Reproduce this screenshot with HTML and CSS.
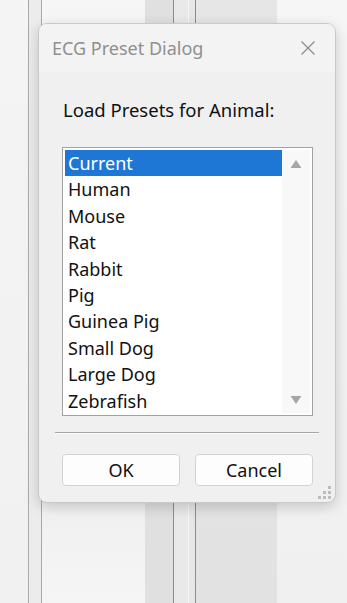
FILE: index.html
```html
<!DOCTYPE html>
<html lang="en">
<head>
    <meta charset="UTF-8">
    <meta name="viewport" content="width=device-width, initial-scale=1.0">
    <title>ECG Preset Dialog</title>
    <link rel="stylesheet" href="styles.css">
</head>
<body>

<!-- window behind the dialog -->
<div class="backdrop">
    <div class="strip s-left"></div>
    <div class="line dark"></div>
    <div class="strip s-gutter"></div>
    <div class="line dark"></div>
    <div class="strip s-panel"></div>
    <div class="strip s-band"></div>
    <div class="line darker"></div>
    <div class="strip s-split"></div>
    <div class="line light"></div>
    <div class="strip s-split2"></div>
    <div class="line darker"></div>
    <div class="strip s-band2"></div>
    <div class="strip s-right"></div>
</div>

<div class="dialog">
    <div class="titlebar">
        <span class="title">ECG Preset Dialog</span>
        <svg class="close" width="16" height="16" viewBox="0 0 16 16">
            <path d="M1.5 1.5 L14.5 14.5 M14.5 1.5 L1.5 14.5" stroke="#8a8a8a" stroke-width="1.2" fill="none"/>
        </svg>
    </div>

    <div class="content">
        <p class="label">Load Presets for Animal:</p>

        <div class="listbox">
            <ul class="items">
                <li class="selected">Current</li>
                <li>Human</li>
                <li>Mouse</li>
                <li>Rat</li>
                <li>Rabbit</li>
                <li>Pig</li>
                <li>Guinea Pig</li>
                <li>Small Dog</li>
                <li>Large Dog</li>
                <li>Zebrafish</li>
            </ul>
            <div class="scrollbar">
                <svg width="12" height="10" viewBox="0 0 12 10"><path d="M6 1 L11.5 9 L0.5 9 Z" fill="#a6a6a6"/></svg>
                <svg width="12" height="10" viewBox="0 0 12 10"><path d="M0.5 1 L11.5 1 L6 9 Z" fill="#a6a6a6"/></svg>
            </div>
        </div>

        <hr class="separator">

        <div class="buttons">
            <button class="btn">OK</button>
            <button class="btn">Cancel</button>
        </div>
    </div>

    <svg class="grip" width="14" height="14" viewBox="0 0 14 14">
        <rect x="10" y="0" width="3" height="3" fill="#bdbdbd"/>
        <rect x="5" y="5" width="3" height="3" fill="#bdbdbd"/>
        <rect x="10" y="5" width="3" height="3" fill="#bdbdbd"/>
        <rect x="0" y="10" width="3" height="3" fill="#bdbdbd"/>
        <rect x="5" y="10" width="3" height="3" fill="#bdbdbd"/>
        <rect x="10" y="10" width="3" height="3" fill="#bdbdbd"/>
    </svg>
</div>

</body>
</html>
```

FILE: styles.css
```css
body {
    margin: 0;
    padding: 0;
    width: 347px;
    height: 603px;
    overflow: hidden;
    font-family: "Noto Sans", "Open Sans", sans-serif;
    background: #f3f3f3;
}
.backdrop {
    display: flex;
    height: 603px;
}
.strip {
    height: 100%;
}
.line {
    width: 1px;
    height: 100%;
}
.line.dark { background: #a9a9a9; }
.line.darker { background: #8c8c8c; }
.line.light { background: #f7f7f7; }
.s-left { width: 28px; background: linear-gradient(#f4f4f4, #f1f1f1); }
.s-gutter { width: 12px; background: #ececec; }
.s-panel { width: 103px; background: linear-gradient(#f6f6f6, #ececec 70%, #f5f5f5); }
.s-band { width: 28px; background: #e0e0e0; }
.s-split { width: 14px; background: #e9e9e9; }
.s-split2 { width: 6px; background: #e6e6e6; }
.s-band2 { width: 81px; background: linear-gradient(#e6e6e6, #e2e2e2); }
.s-right { flex: 1; background: linear-gradient(#f6f6f6, #f0f0f0); }

/* dialog floats over the window */
.dialog {
    position: absolute;
    left: 38px;
    top: 23px;
    width: 298px;
    height: 480px;
    background: #f0f0f0;
    border: 1px solid #c9c9c9;
    border-radius: 9px;
    box-shadow: 0 4px 14px rgba(0, 0, 0, 0.18);
    box-sizing: border-box;
    overflow: hidden;
}
.titlebar {
    height: 48px;
    display: flex;
    align-items: center;
    justify-content: space-between;
    padding: 0 19px 0 13px;
    background: #f3f3f3;
}
.title {
    font-size: 18px;
    color: #8f8f8f;
}
.close {
    display: block;
}
.content {
    padding: 0 22px 0 16px;
}
.label {
    margin: 26px 0 0 8px;
    font-size: 18.5px;
    line-height: 24px;
    color: #111;
}
.listbox {
    margin: 25px 0 0 7px;
    height: 269px;
    border: 1px solid #a2a2a2;
    background: #fff;
    display: flex;
    box-sizing: border-box;
    padding: 2px;
}
.items {
    list-style: none;
    margin: 0;
    padding: 0;
    flex: 1;
}
.items li {
    height: 26.4px;
    line-height: 26px;
    padding-left: 3px;
    font-size: 18px;
    color: #111;
}
.items li.selected {
    background: #1e77d5;
    color: #fff;
}
.scrollbar {
    width: 28px;
    background: #f8f8f8;
    display: flex;
    flex-direction: column;
    align-items: center;
    justify-content: space-between;
    padding: 9px 0 8px;
}
.separator {
    margin: 16px 0 0 0;
    border: 0;
    border-top: 1px solid #a5a5a5;
    border-bottom: 1px solid #fcfcfc;
    width: 264px;
}
.buttons {
    display: flex;
    gap: 15px;
    margin: 20px 0 0 7px;
}
.btn {
    width: 118px;
    height: 32px;
    background: #fdfdfd;
    border: 1px solid #d3d3d3;
    border-radius: 4px;
    font-family: "Noto Sans", "Open Sans", sans-serif;
    font-size: 18px;
    color: #111;
    padding: 0;
}
.grip {
    position: absolute;
    right: 3px;
    bottom: 2px;
}
```
